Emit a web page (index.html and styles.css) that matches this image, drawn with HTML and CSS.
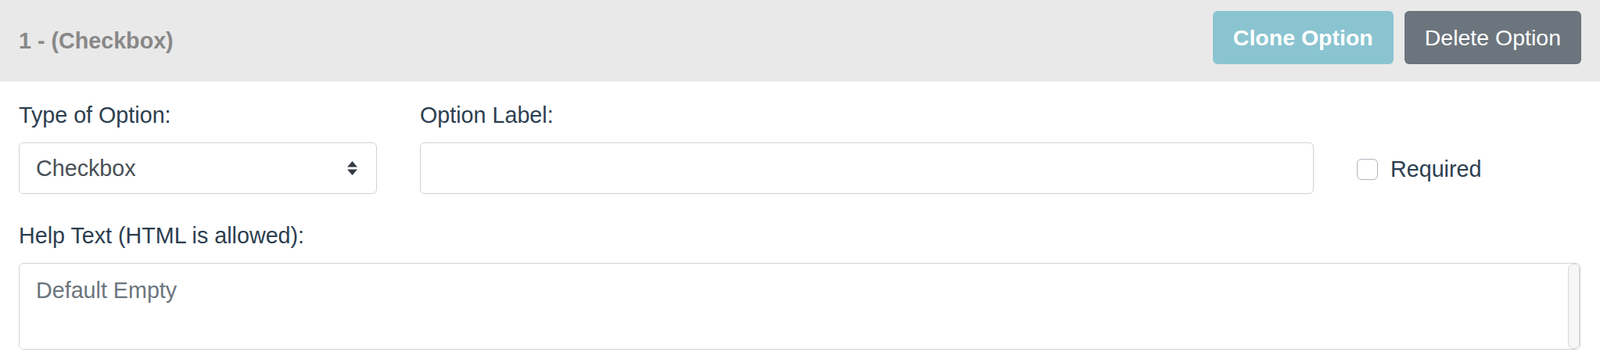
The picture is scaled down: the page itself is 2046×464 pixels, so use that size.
FILE: index.html
```html
<!doctype html>
<html lang="en">
<head>
    <meta charset="UTF-8">
    <meta name="viewport" content="width=device-width, initial-scale=1.0">
    <link rel="stylesheet" href="styles.css">
    <title>Option 1</title>
</head>
<body>
<section class="option-card">
    <header class="option-header">
        <h2 class="option-title">1 - (Checkbox)</h2>
        <div class="option-actions">
            <button class="btn btn-clone" type="button">Clone Option</button>
            <button class="btn btn-delete" type="button">Delete Option</button>
        </div>
    </header>

    <div class="option-body">
        <div class="option-row">
            <div class="field">
                <label class="field-label" for="option-type">Type of Option:</label>
                <div class="select-box">
                    <select id="option-type" class="select-input">
                        <option>Checkbox</option>
                        <option>Text</option>
                        <option>Dropdown</option>
                    </select>
                    <svg class="select-arrow" width="13" height="18" viewBox="0 0 13 18" aria-hidden="true">
                        <polygon points="0,7.5 6.5,0 13,7.5" fill="#343a40"/>
                        <polygon points="0,10.5 13,10.5 6.5,18" fill="#343a40"/>
                    </svg>
                </div>
            </div>
            <div class="field">
                <label class="field-label" for="option-label">Option Label:</label>
                <input id="option-label" class="text-input" type="text">
            </div>
            <div class="field field-check">
                <label class="check-label">
                    <input class="check-input" type="checkbox">
                    <span>Required</span>
                </label>
            </div>
        </div>

        <div class="field">
            <label class="field-label" for="help-text">Help Text (HTML is allowed):</label>
            <div class="textarea-box">
                <textarea id="help-text" class="textarea-input" rows="2" placeholder="Default Empty"></textarea>
                <span class="scroll-track"></span>
            </div>
        </div>
    </div>
</section>
</body>
</html>
```

FILE: styles.css
```css
* {
    box-sizing: border-box;
}

body {
    margin: 0;
    background: #fff;
    color: #2c3e50;
    font-family: 'Liberation Sans', Arial, sans-serif;
    font-size: 28.7px;
    line-height: 42px;
}

.option-header {
    display: flex;
    align-items: center;
    justify-content: space-between;
    height: 104px;
    padding: 0 24px;
    background-color: #e9e9e9;
}

.option-title {
    margin: 0;
    color: #888;
    font-size: 28.7px;
    font-weight: bold;
}

.option-actions {
    display: flex;
    gap: 14px;
    margin-bottom: 8px;
}

.btn {
    height: 68px;
    padding: 0 26px;
    border: none;
    border-radius: 6px;
    color: #fff;
    font-family: inherit;
    font-size: 28.5px;
    cursor: pointer;
}

.btn-clone {
    background-color: #8ac4d0;
    font-weight: bold;
}

.btn-delete {
    background-color: #6c757d;
}

.option-body {
    padding: 22px 25px 0 24px;
}

.option-row {
    display: grid;
    grid-template-columns: 458px 1143px 1fr;
    column-gap: 55px;
    margin-bottom: 32px;
}

.field-label {
    display: block;
    margin-bottom: 14px;
}

.select-box {
    display: flex;
    align-items: center;
    height: 66px;
    padding: 0 24px 0 21px;
    border: 1.5px solid #ced4da;
    border-radius: 6px;
}

.select-input {
    flex: 1;
    padding: 0;
    border: none;
    outline: none;
    background: transparent;
    color: #495057;
    font-family: inherit;
    font-size: 28.7px;
    -webkit-appearance: none;
    appearance: none;
}

.text-input {
    display: block;
    width: 100%;
    height: 66px;
    margin-top: 2px;
    border: 1.5px solid #ced4da;
    border-radius: 6px;
    font-family: inherit;
    font-size: 28.7px;
}

.field-check {
    display: flex;
    align-items: center;
    padding-top: 58px;
}

.check-label {
    display: flex;
    align-items: center;
    gap: 16px;
}

.check-input {
    width: 27px;
    height: 27px;
    margin: 0;
    border: 1.5px solid #adb5bd;
    border-radius: 6px;
    background: #fff;
    -webkit-appearance: none;
    appearance: none;
}

.textarea-box {
    display: flex;
    height: 111px;
    border: 1.5px solid #ced4da;
    border-radius: 6px;
    overflow: hidden;
}

.textarea-input {
    flex: 1;
    padding: 13px 21px 8px;
    border: none;
    outline: none;
    resize: none;
    color: #495057;
    font-family: inherit;
    font-size: 28.7px;
    line-height: 42px;
}

.textarea-input::placeholder {
    color: #6c757d;
}

.scroll-track {
    width: 15px;
    border: 1.5px solid #d4d7dc;
    border-radius: 7px;
    background-color: #f7f7f7;
}
```
